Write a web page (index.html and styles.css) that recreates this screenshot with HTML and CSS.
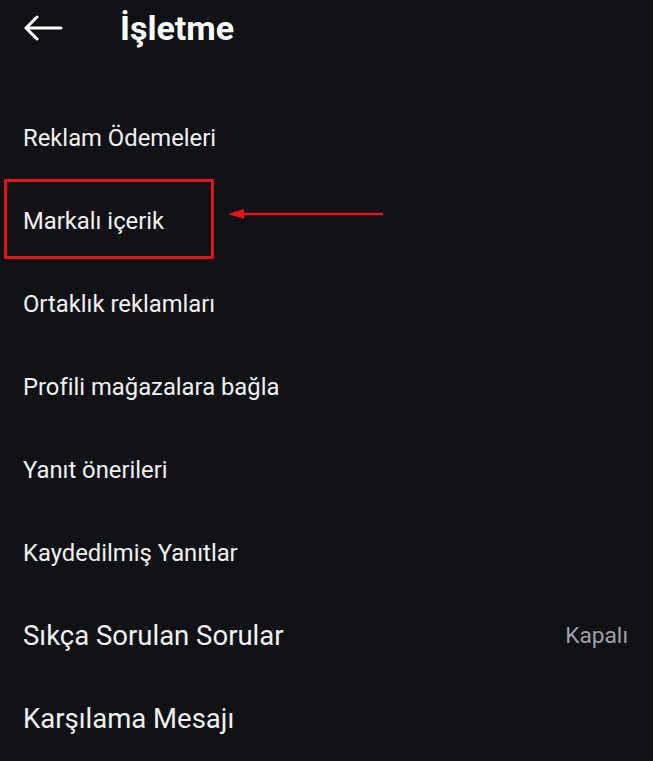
FILE: index.html
```html
<!DOCTYPE html>
<html lang="tr">
<head>
<meta charset="utf-8">
<link rel="stylesheet" href="styles.css">
</head>
<body>
<div class="screen">
  <header class="header">
    <svg class="back" width="40" height="26" viewBox="0 0 40 26"><path d="M38 13H3M14 2L3 13L14 24" fill="none" stroke="#fff" stroke-width="3" stroke-linecap="round" stroke-linejoin="round"/></svg>
    <h1 class="title">İşletme</h1>
  </header>
  <ul class="list">
    <li class="row">Reklam Ödemeleri</li>
    <li class="row highlighted">Markalı içerik
      <span class="mark-box"></span>
      <svg class="mark-arrow" width="156" height="12" viewBox="0 0 156 12"><path d="M14 6H154" stroke="#e4141b" stroke-width="2.5" stroke-linecap="round"/><path d="M0 6L16 1V11Z" fill="#e4141b"/></svg>
    </li>
    <li class="row">Ortaklık reklamları</li>
    <li class="row">Profili mağazalara bağla</li>
    <li class="row">Yanıt önerileri</li>
    <li class="row">Kaydedilmiş Yanıtlar</li>
    <li class="row large"><span>Sıkça Sorulan Sorular</span><span class="value">Kapalı</span></li>
    <li class="row large">Karşılama Mesajı</li>
  </ul>
</div>
</body>
</html>
```
FILE: styles.css
```css
html, body {
  margin: 0;
  padding: 0;
  background: #0f1115;
}
.screen {
  width: 653px;
  height: 761px;
  overflow: hidden;
  background: #0f1115;
  color: #f2f2f2;
  font-family: Roboto, "Noto Sans", sans-serif;
}
.header {
  height: 56px;
  display: flex;
  align-items: center;
  padding-left: 23px;
  box-sizing: border-box;
}
.back {
  display: block;
}
.title {
  margin: 0 0 0 57px;
  font-size: 34px;
  font-weight: 700;
  color: #fff;
  line-height: 1;
}
.list {
  list-style: none;
  margin: 40px 0 0;
  padding: 0;
}
.row {
  height: 83px;
  display: flex;
  align-items: center;
  justify-content: space-between;
  padding: 0 25px 0 23px;
  font-size: 23.8px;
  position: relative;
}
.row.large {
  font-size: 27.5px;
}
.value {
  color: #a0a0a4;
  font-size: 22.7px;
}
.mark-box {
  position: absolute;
  left: 4px;
  top: 0;
  width: 204px;
  height: 74px;
  border: 3px solid #e0141a;
  border-radius: 1px;
}
.mark-arrow {
  position: absolute;
  left: 228px;
  top: 29px;
}
```
